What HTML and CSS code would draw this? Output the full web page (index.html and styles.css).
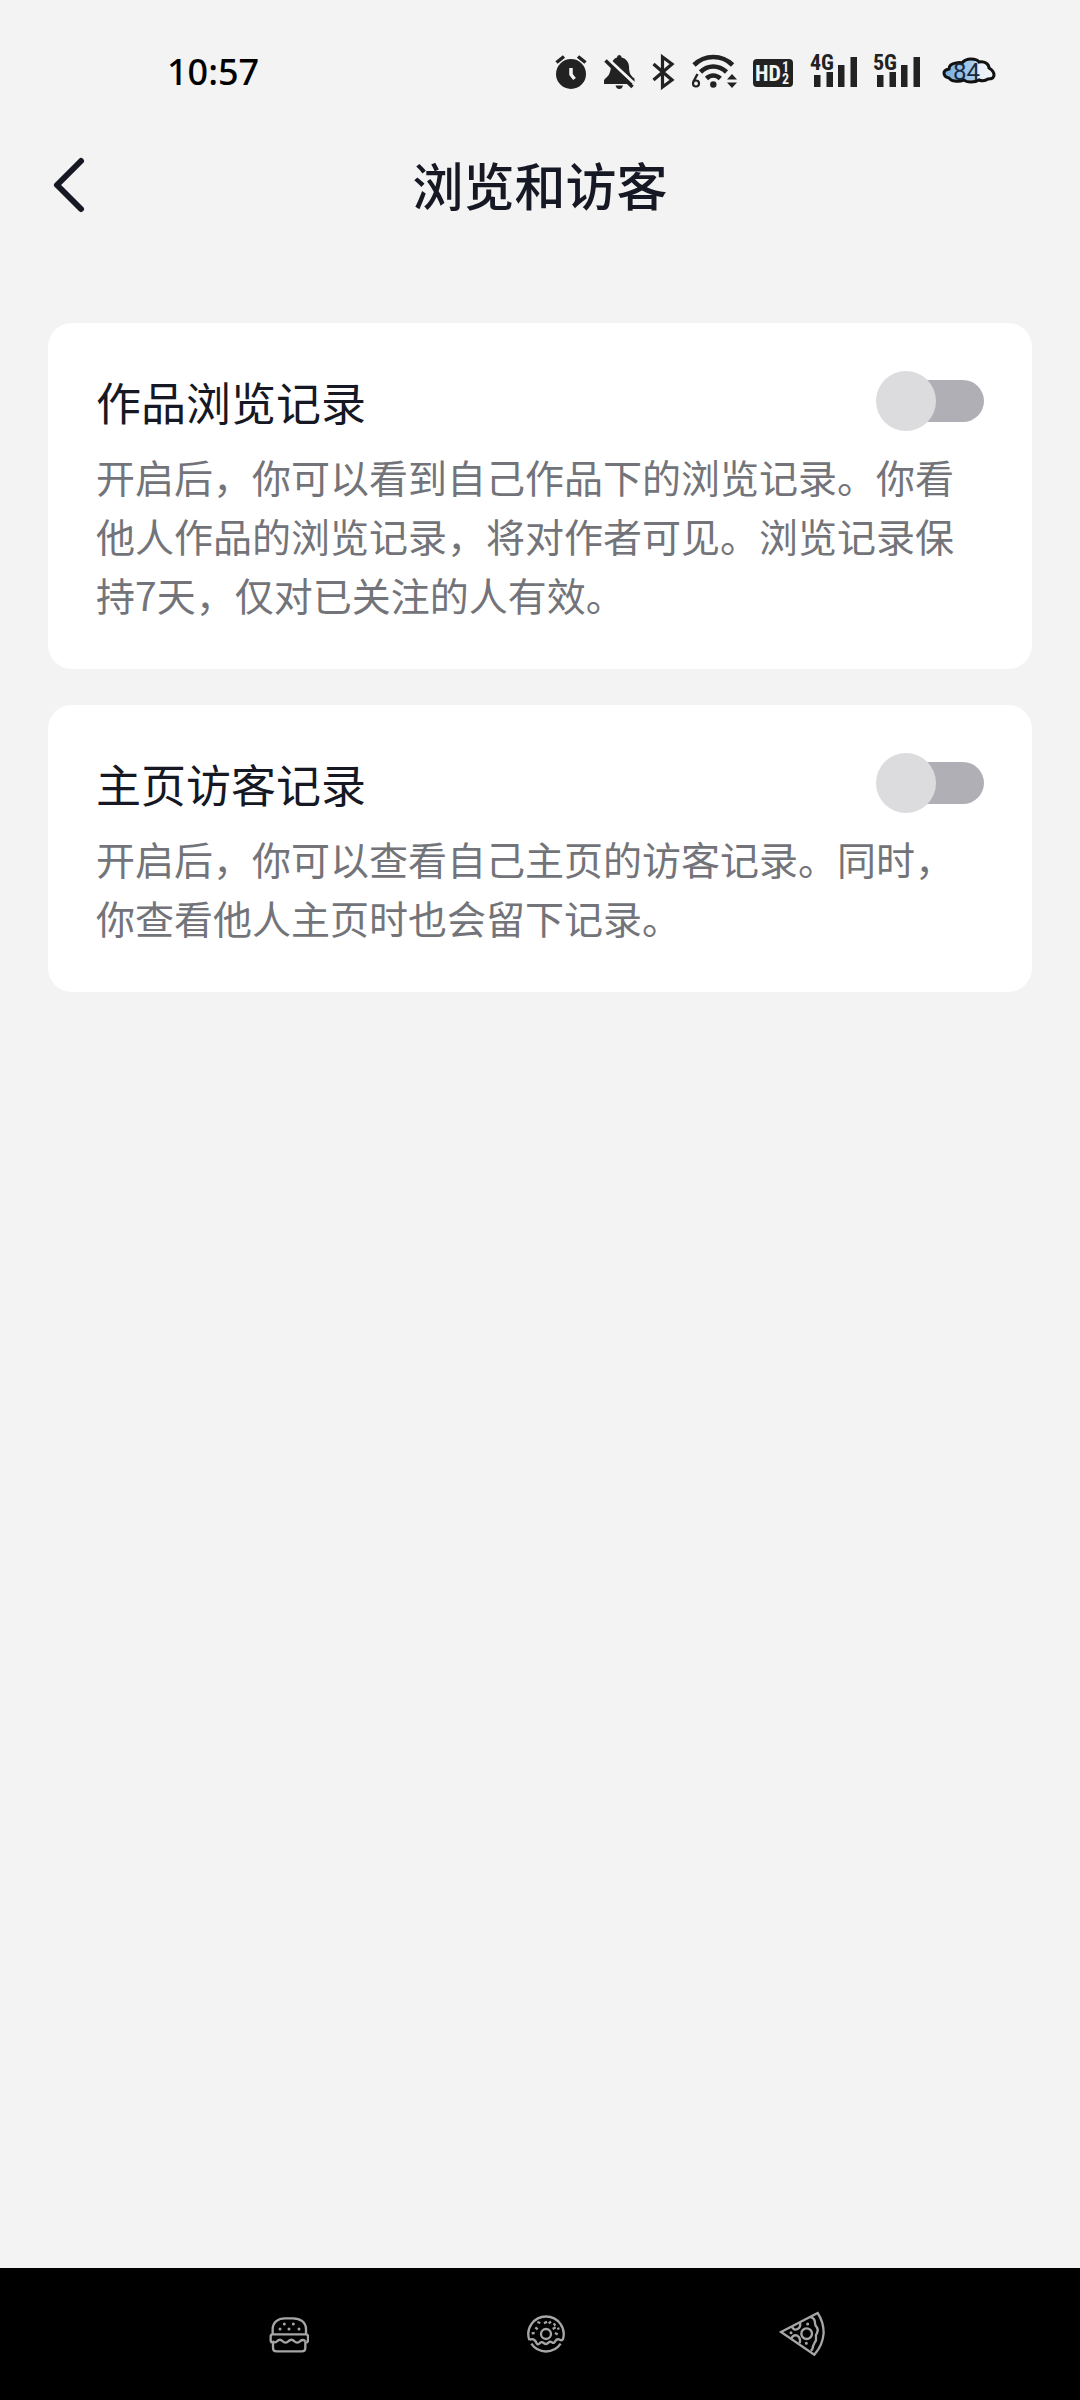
FILE: index.html
```
<!DOCTYPE html>
<html lang="zh-CN">
<head>
    <meta charset="utf-8">
    <meta name="viewport" content="width=device-width, initial-scale=1">
    <title>浏览和访客</title>
    <link rel="stylesheet" href="styles.css">
</head>

<body>
    <div class="status">
        <div class="status__time">10:57</div>
        <div class="status__icons">
            <!-- alarm -->
            <svg width="34" height="36" viewBox="0 0 34 36">
                <circle cx="16" cy="20" r="15" fill="#222"/>
                <path d="M1.500 8.500L9 2.500M23 2.500l7.500 6" stroke="#222" stroke-width="3.500" fill="none"/>
                <path d="M16 14v6.500l3.500 4.500" stroke="#f3f3f3" stroke-width="3.500" fill="none"/>
            </svg>
            <!-- muted bell -->
            <svg width="34" height="36" viewBox="0 0 34 36">
                <path d="M1 30v-3.500q0-1.500 3-3.500 2-1.500 3-5 1-3 1-6 1-7 6-8.500 0-2.500 2.300-2.500T18.600 3.500Q25 5 26 12q0 6 1.500 8.500 1.500 2.500 4 4V30z" fill="#222"/>
                <path d="M12.500 31.500h7.500q-1 3.500-3.700 3.500t-3.800-3.500z" fill="#222"/>
                <path d="M3 3L34 32" stroke="#f3f3f3" stroke-width="3"/>
                <path d="M2.500 6.500L29.500 33" stroke="#222" stroke-width="3.500"/>
            </svg>
            <!-- bluetooth -->
            <svg width="26" height="36" viewBox="0 0 26 36">
                <path d="M2.500 10l18.500 16-9.500 7V3l9.500 7L2.500 26" fill="none" stroke="#222" stroke-width="3.200"/>
            </svg>
            <!-- wifi 6 -->
            <svg width="48" height="36" viewBox="0 0 48 36">
                <path d="M3 11Q11 3 22.300 3t19.300 8M9.500 18Q15 12.500 22.300 12.500T35.500 18M15.500 24.500q3-3 6.800-3t7 3" fill="none" stroke="#222" stroke-width="4.600"/>
                <circle cx="22.300" cy="30.500" r="3.200" fill="#222"/>
                <path d="M6.500 20L2.500 27.500" stroke="#222" stroke-width="2.400" fill="none"/>
                <circle cx="5" cy="29.500" r="3" fill="none" stroke="#222" stroke-width="2.200"/>
                <path d="M36 25.500l5-5.500 5 5.500zM36 28.500h10l-5 5.500z" fill="#222"/>
            </svg>
            <!-- HD 1/2 -->
            <svg class="status__label" width="42" height="36" viewBox="1 0 42 36">
                <rect x="1" y="5" width="40" height="28" rx="4" fill="#222"/>
                <text x="3" y="27" font-size="22" fill="#f3f3f3">HD</text>
                <text x="30" y="18" font-size="14" fill="#f3f3f3">1</text>
                <text x="30" y="30" font-size="14" fill="#f3f3f3">2</text>
            </svg>
            <!-- 4G -->
            <svg class="status__label" width="48" height="56" viewBox="0 -10 48 56">
                <path d="M5 21h6.500v12H5zM17.500 18H24v15h-6.500zM29 11h6.500v22H29zM41.500 3H48v30h-6.500z" fill="#222"/>
                <text x="1" y="16" font-size="22" fill="#222">4G</text>
            </svg>
            <!-- 5G -->
            <svg class="status__label" width="50" height="56" viewBox="0 -10 50 56">
                <path d="M6 21h6.500v12H6zM18.500 18H25v15h-6.500zM30 11h6.500v22H30zM42.500 3H49v30h-6.500z" fill="#222"/>
                <text x="2" y="16" font-size="22" fill="#222">5G</text>
            </svg>
            <!-- battery cloud -->
            <svg class="status__battery" width="62" height="36" viewBox="0 0 62 36">
                <defs>
                    <linearGradient id="cloud">
                        <stop offset="0" stop-color="#78aee0"/>
                        <stop offset=".6" stop-color="#a9cdec"/>
                        <stop offset=".7" stop-color="#e4eff8"/>
                        <stop offset="1" stop-color="#f3f6f9"/>
                    </linearGradient>
                </defs>
                <path d="M14 24q-5-1-5-5 0-3 5-4 0-5 7-6 4-1 6 0 3-4 9-4 6 0 8 3 4-1 7 1 3 2 3 5 5 3 5 7 0 4-6 4-4 3-9 1-3 2-8 2-5 0-7-2-5 2-9 1-4 0-6-3z" fill="url(#cloud)" stroke="#111" stroke-width="3"/>
                <text x="18" y="26" font-size="24" fill="#17283d">84</text>
            </svg>
        </div>
    </div>

    <header class="header">
        <button class="header__back" type="button" aria-label="返回">
            <svg width="36" height="60" viewBox="0 0 36 60">
                <path d="M31 7L7 31l24 24" fill="none" stroke="#161823" stroke-width="6" stroke-linecap="round" stroke-linejoin="round"/>
            </svg>
        </button>
        <h1 class="header__title">浏览和访客</h1>
    </header>

    <main class="settings">
        <section class="card">
            <div class="card__top">
                <label class="card__title" for="works">作品浏览记录</label>
                <input class="switch" type="checkbox" role="switch" id="works">
            </div>
            <p class="card__desc">开启后，你可以看到自己作品下的浏览记录。你看他人作品的浏览记录，将对作者可见。浏览记录保持7天，仅对已关注的人有效。</p>
        </section>
        <section class="card">
            <div class="card__top">
                <label class="card__title" for="visitors">主页访客记录</label>
                <input class="switch" type="checkbox" role="switch" id="visitors">
            </div>
            <p class="card__desc">开启后，你可以查看自己主页的访客记录。同时，你查看他人主页时也会留下记录。</p>
        </section>
    </main>

    <nav class="navbar">
        <!-- burger -->
        <button class="navbar__item" type="button" aria-label="最近任务">
            <svg width="40" height="37" viewBox="0 0 120 111">
                <path d="M11 54V40C11 18 28 7 48 7h24c22 0 39 12 39 33v14"/>
                <path d="M12 80q-7 0-7-7V61q0-6 6-6h100q6 0 6 6v12q0 7-7 7M10 75q8 8 15 0 8-7 15 0 10 10 19 0 8-7 16 0 10 10 19 0 8-7 16 1M12 78v17q0 11 11 11h75q11 0 11-11V78"/>
                <path class="dots" d="M46 24v.1M73 24v.1M33 39v.1M60 39v.1M90 39v.1"/>
            </svg>
        </button>
        <!-- donut -->
        <button class="navbar__item" type="button" aria-label="主屏幕">
            <svg width="38" height="38" viewBox="0 0 114 114">
                <path d="M7 75A53 53 0 1 1 107 75M13 86A53 53 0 0 0 101 86"/>
                <circle cx="57" cy="57" r="15"/>
                <path d="M7 75q9-5 15 0 5 4 7 10 4 6 9 0 5-7 12-1 8 6 14-1 5-5 11-1 6 5 10-4 5-8 13-4 5 3 9 1"/>
                <path d="M31 21l9 3M51 25l9-5M65 25l7-5M80 25l5 7M25 37l7 6M77 42l9-5M14 55l9-1M84 54l8 4M93 38l2 6"/>
            </svg>
        </button>
        <!-- pizza -->
        <button class="navbar__item" type="button" aria-label="返回上一级">
            <svg width="48" height="46" viewBox="0 0 144 138">
                <path d="M6 63L116 6q18 27 18 60-3 38-28 65z"/>
                <path d="M94 18q14 3 14 18 0 7 5 12 6 8 1 18-5 7-3 14 2 9-5 17-5 8-5 15-1 5-6 7M38 46q6 14 18 8 10-5 7-20M37 83q5-14 18-9 11 6 7 23"/>
                <circle cx="83" cy="68" r="16"/>
                <path class="dots" d="M86 39v.1M36 65v.1M82 97v.1"/>
            </svg>
        </button>
    </nav>
</body>
</html>
```
FILE: styles.css
```
* {
    box-sizing: border-box;
}

body {
    margin: 0;
    min-height: 100vh;
    display: flex;
    flex-direction: column;
    background-color: #f3f3f3;
    color: #161823;
    font-family: 'Noto Sans CJK SC', sans-serif;
}

button {
    padding: 0;
    border: none;
    background: none;
    cursor: pointer;
}

svg {
    display: block;
}

.status {
    height: 144px;
    padding: 0 83px 0 167px;
    display: flex;
    justify-content: space-between;
    align-items: center;
}

.status__time {
    color: #000;
    font-family: 'Noto Sans', sans-serif;
    font-size: 36px;
    font-weight: 500;
    line-height: 48px;
}

.status__icons {
    display: flex;
    align-items: center;
    gap: 14px;
}

.status__label {
    font-family: 'Liberation Sans Narrow', 'Roboto Condensed', Roboto, sans-serif;
    font-weight: bold;
}

.status__battery {
    font-family: Roboto, sans-serif;
}

.header {
    height: 80px;
    padding: 0 50px;
    display: grid;
    grid-template-columns: 36px 1fr 36px;
    align-items: center;
}

.header__title {
    margin: 0;
    text-align: center;
    font-size: 51px;
    font-weight: 500;
    line-height: 80px;
}

.settings {
    flex: 1;
    padding: 99px 48px 48px;
    display: flex;
    flex-direction: column;
    gap: 36px;
}

.card {
    padding: 48px 48px 45px;
    border-radius: 24px;
    background-color: #fff;
}

.card__top {
    display: flex;
    justify-content: space-between;
    align-items: flex-start;
}

.card__title {
    font-size: 45px;
    line-height: 62px;
}

.card__desc {
    margin: 14px 0 0;
    color: #737479;
    font-size: 39px;
    line-height: 59px;
}

.switch {
    appearance: none;
    width: 108px;
    height: 60px;
    margin: 0;
    display: flex;
    align-items: center;
    cursor: pointer;
}

.switch::before {
    content: "";
    width: 60px;
    height: 60px;
    border-radius: 50%;
    background-color: #dcdcde;
    z-index: 1;
}

/* right end of the track, tucked under the knob */
.switch::after {
    content: "";
    width: 78px;
    height: 42px;
    margin-left: -30px;
    border-radius: 21px;
    background-color: #b0afb5;
}

.switch:checked {
    flex-direction: row-reverse;
}

.switch:checked::before {
    background-color: #fe2c55;
}

.switch:checked::after {
    margin: 0 -30px 0 0;
}

.navbar {
    height: 132px;
    padding: 0 149px 0 160px;
    display: grid;
    grid-template-columns: repeat(3, 1fr);
    background-color: #000;
}

.navbar__item {
    display: flex;
    justify-content: center;
    align-items: center;
}

.navbar__item svg {
    fill: none;
    stroke: #a6a6a6;
    stroke-width: 7;
}

.navbar__item .dots {
    stroke-width: 9;
    stroke-linecap: round;
}
```
